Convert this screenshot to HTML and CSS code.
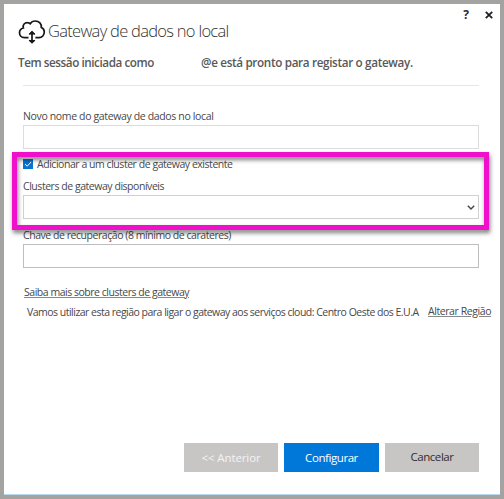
FILE: index.html
```
<!DOCTYPE html>
<html lang="pt">
<head>
<meta charset="utf-8">
<title>Gateway de dados no local</title>
<link rel="stylesheet" href="styles.css">
</head>
<body>
<main class="dialog">
  <header class="header">
    <svg class="cloud" viewBox="0 0 28 26" width="28" height="26" fill="none" stroke="#161616" stroke-width="1.7">
      <path d="M10.5 18.7H6.4C3.4 18.7 1.5 16.5 1.5 13.8C1.5 11.2 3.3 9.5 5.4 9C4.3 5.5 7 3.6 9.4 3.7C10.6 3.7 11.4 4.1 12.2 4.8C13.5 2.7 15.2 2 17.2 2C21.2 2 23.7 4.8 23.3 8.5C25.3 9.2 26.3 11.1 26.3 13.1C26.3 16 24.2 18.7 21 18.7H17.4"/>
      <path d="M14 14V22"/>
      <path d="M10.7 15.6L14 11.8L17.3 15.6ZM10.7 21L14 24.4L17.3 21Z" fill="#161616" stroke="none"/>
      <path d="M11.2 15.2L14 12.7L16.8 15.2M11.2 21.3L14 23.8L16.8 21.3" stroke-width="1.2"/>
    </svg>
    <h1 class="title">Gateway de dados no local</h1>
    <div class="tools">
      <span class="help">?</span>
      <svg class="close" viewBox="0 0 8 8" width="8" height="8" stroke="#1d1d26" stroke-width="1.8"><path d="M.8 .8L7.2 7.2M7.2 .8L.8 7.2"/></svg>
    </div>
  </header>
  <p class="status"><span class="signed">Tem sessão iniciada como</span><span class="ready">@e está pronto para registar o gateway.</span></p>
  <form class="form">
    <label class="label name-label">Novo nome do gateway de dados no local</label>
    <div class="field"></div>
    <section class="cluster">
      <label class="label check-label"><svg class="check" viewBox="0 0 10 10" width="10" height="10"><rect width="10" height="10" fill="#0874d1"/><path d="M2 5L4.2 7.2L8.2 2.9" fill="none" stroke="#fff" stroke-width="1"/></svg>Adicionar a um cluster de gateway existente</label>
      <label class="label list-label">Clusters de gateway disponíveis</label>
      <div class="field select"><svg viewBox="0 0 8 5" width="8" height="5" fill="none" stroke="#444" stroke-width="1.4"><path d="M.8 .8L4 4L7.2 .8"/></svg></div>
      <div class="highlight"></div>
    </section>
    <label class="label key-label">Chave de recuperação (8 mínimo de carateres)</label>
    <div class="field key"></div>
  </form>
  <div class="more"><a class="link">Saiba mais sobre clusters de gateway</a></div>
  <div class="region"><span class="region-text">Vamos utilizar esta região para ligar o gateway aos serviços cloud: Centro Oeste dos E.U.A</span><a class="link change">Alterar Região</a></div>
  <footer class="actions">
    <div class="button previous"><span>&lt;&lt; Anterior</span></div>
    <div class="button primary"><span>Configurar</span></div>
    <div class="button cancel"><span>Cancelar</span></div>
  </footer>
</main>
</body>
</html>
```
FILE: styles.css
```
* { box-sizing: border-box; }
body { margin: 0; font-family: "Open Sans", "Noto Sans", sans-serif; color: #484848; }
.dialog {
  width: 504px; height: 499px; border: 4px solid #a3a3a2;
  background: #fff; box-shadow: inset 0 -1px #b9d9ef;
  display: flex; flex-direction: column; white-space: nowrap;
}
.header { display: flex; height: 50px; padding-left: 14px; flex: none; }
.cloud { margin-top: 15px; flex: none; }
.title { margin: 15px 0 0 2px; font-size: 16.5px; line-height: 24px; font-weight: 300; letter-spacing: -.715px; color: #333; }
.tools { display: flex; margin-left: auto; padding-right: 7px; }
.help { font-size: 12px; font-weight: 700; line-height: 16px; margin: 3px 16px 0 0; color: #2a2a38; }
.close { margin-top: 7px; }
.status { display: flex; margin: 0; padding-left: 14px; height: 31px; font-size: 11.7px; font-weight: 600; line-height: 16px; color: #585858; }
.signed { width: 183px; letter-spacing: -.437px; }
.ready { letter-spacing: -.338px; }
.form { width: 456px; margin: 0 0 0 19px; border-top: 1px solid #e6e6e6; padding-top: 22px; }
.label { display: block; height: 16px; font-size: 10.5px; line-height: 16px; letter-spacing: -.457px; }
.name-label { letter-spacing: -.355px; }
.field { height: 24px; border: 1px solid #dcdcdc; margin-top: 1px; }
.cluster { position: relative; padding-top: 7px; }
.check-label { display: flex; }
.check { margin: 3px 4px 0 0; }
.list-label { margin-top: 6px; }
.select { display: flex; justify-content: flex-end; align-items: center; padding-right: 3px; border-color: #d0d0d0; }
.highlight { position: absolute; left: -11px; top: 3px; width: 477px; height: 78px; border: 5px solid #f00fca; filter: drop-shadow(1px 3px 2px rgba(0,0,0,.5)); }
.key-label { margin-top: 8px; letter-spacing: -.452px; }
.key { border-color: #bebebe; }
.more { padding-left: 20px; margin-top: 16px; height: 20px; font-size: 10.5px; line-height: 16px; }
.link { text-decoration: underline; text-decoration-color: #888; text-underline-offset: 1px; letter-spacing: -.473px; }
.region { display: flex; padding-left: 23px; height: 16px; font-size: 10.5px; line-height: 16px; }
.region-text { width: 401px; letter-spacing: -.511px; }
.change { letter-spacing: -.42px; margin-top: -1px; }
.actions { display: flex; justify-content: flex-end; gap: 6px; margin: auto 21px 23px 0; }
.button { width: 94px; height: 29px; background: #c8c6c5; display: flex; justify-content: center; font-size: 11.5px; line-height: 29px; letter-spacing: -.43px; color: #2f2f2f; }
.previous { color: #f3f3f3; letter-spacing: -.1px; }
.primary { width: 95px; background: #0078d9; color: #fff; }
.cancel { line-height: 27px; }
```
